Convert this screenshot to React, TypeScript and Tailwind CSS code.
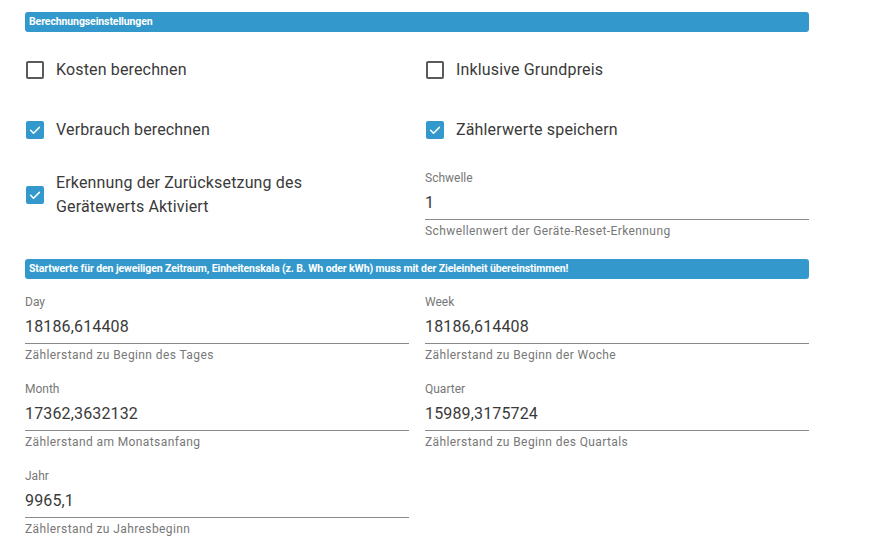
import React from 'react'

function Header({ text }: { text: string }) {
  return (
    <div className="h-5 w-full rounded-[3px] bg-[#3399cc] pl-1 flex items-center text-[10.5px] font-bold text-white tracking-[-0.1px]">
      {text}
    </div>
  )
}

function CheckBox({ checked }: { checked: boolean }) {
  if (checked) {
    return (
      <div className="w-[18px] h-[18px] shrink-0 rounded-[2px] bg-[#3399cc] flex items-center justify-center">
        <svg width="14" height="14" viewBox="0 0 24 24" fill="none">
          <path d="M4.5 12.5l5 5 10-10" stroke="#fff" strokeWidth="2.6" strokeLinecap="round" strokeLinejoin="round" />
        </svg>
      </div>
    )
  }
  return <div className="w-[18px] h-[18px] shrink-0 rounded-[2px] border-2 border-[#5a5a5a]" />
}

function Check({ label, checked }: { label: React.ReactNode; checked: boolean }) {
  return (
    <div className="flex items-center gap-3 pl-px">
      <CheckBox checked={checked} />
      <div className="text-base leading-6 text-[#3a3a3a] tracking-[0.15px]">{label}</div>
    </div>
  )
}

function Field({ label, value, help }: { label: string; value: string; help: string }) {
  return (
    <div className="flex flex-col">
      <div className="h-4 text-xs leading-4 text-[#777]">{label}</div>
      <div className="mt-[5px] pb-1 border-b border-[#8a8a8a]">
        <div className="h-6 text-base leading-6 text-[#3a3a3a] tracking-[0.15px]">{value}</div>
      </div>
      <div className="mt-[3px] text-xs leading-4 text-[#777] tracking-[0.4px]">{help}</div>
    </div>
  )
}

function App() {
  return (
    <div className="w-[891px] h-[552px] bg-white overflow-hidden font-['Roboto',sans-serif]">
      <div className="w-[784px] ml-[25px] pt-3">
        <Header text="Berechnungseinstellungen" />
        <div className="grid grid-cols-2 gap-x-4 mt-2">
          <div className="h-[60px] flex items-center">
            <Check label="Kosten berechnen" checked={false} />
          </div>
          <div className="h-[60px] flex items-center">
            <Check label="Inklusive Grundpreis" checked={false} />
          </div>
          <div className="h-[60px] flex items-center">
            <Check label="Verbrauch berechnen" checked={true} />
          </div>
          <div className="h-[60px] flex items-center">
            <Check label="Zählerwerte speichern" checked={true} />
          </div>
          <div className="pt-[11px]">
            <Check
              checked={true}
              label={
                <>
                  Erkennung der Zurücksetzung des
                  <br />
                  Gerätewerts Aktiviert
                </>
              }
            />
          </div>
          <div className="pt-[10px]">
            <Field label="Schwelle" value="1" help="Schwellenwert der Geräte-Reset-Erkennung" />
          </div>
        </div>
        <div className="mt-[20px]">
          <Header text="Startwerte für den jeweiligen Zeitraum, Einheitenskala (z. B. Wh oder kWh) muss mit der Zieleinheit übereinstimmen!" />
        </div>
        <div className="grid grid-cols-2 gap-x-4 gap-y-[18px] mt-[15px]">
          <Field label="Day" value="18186,614408" help="Zählerstand zu Beginn des Tages" />
          <Field label="Week" value="18186,614408" help="Zählerstand zu Beginn der Woche" />
          <Field label="Month" value="17362,3632132" help="Zählerstand am Monatsanfang" />
          <Field label="Quarter" value="15989,3175724" help="Zählerstand zu Beginn des Quartals" />
          <Field label="Jahr" value="9965,1" help="Zählerstand zu Jahresbeginn" />
        </div>
      </div>
    </div>
  )
}

export default App
